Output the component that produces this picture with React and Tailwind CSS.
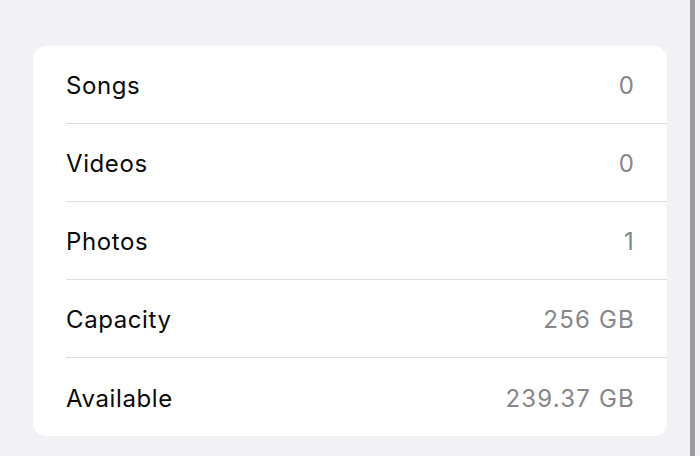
import React from "react";

const rows = [
  ["Songs", "0"],
  ["Videos", "0"],
  ["Photos", "1"],
  ["Capacity", "256 GB"],
  ["Available", "239.37 GB"],
];

export default function App() {
  return (
    <div
      className="w-[700px] h-[456px] bg-[#f1f1f6] flex overflow-hidden"
      style={{ fontFamily: "Inter, 'Liberation Sans', sans-serif" }}
    >
      <div className="w-[690px] pt-[46px] pl-[33px] pr-[23px]">
        <div className="bg-white rounded-[13px] pl-[33px]">
          {rows.map(([label, value], i) => (
            <div
              key={label}
              className={`h-[78px] flex items-center justify-between pr-[32px] pt-[3px] ${
                i < rows.length - 1 ? "border-b border-[#dedee2]" : ""
              }`}
            >
              <span className="text-[24px] text-[#0a0a0a] tracking-[0.6px]">{label}</span>
              <span className="text-[24px] text-[#86868a] tracking-[1.2px]">{value}</span>
            </div>
          ))}
        </div>
      </div>
      <div className="w-[5px] h-full bg-[#9b9b9f]" />
      <div className="w-[5px] h-full bg-[#f1f1f6]" />
    </div>
  );
}
